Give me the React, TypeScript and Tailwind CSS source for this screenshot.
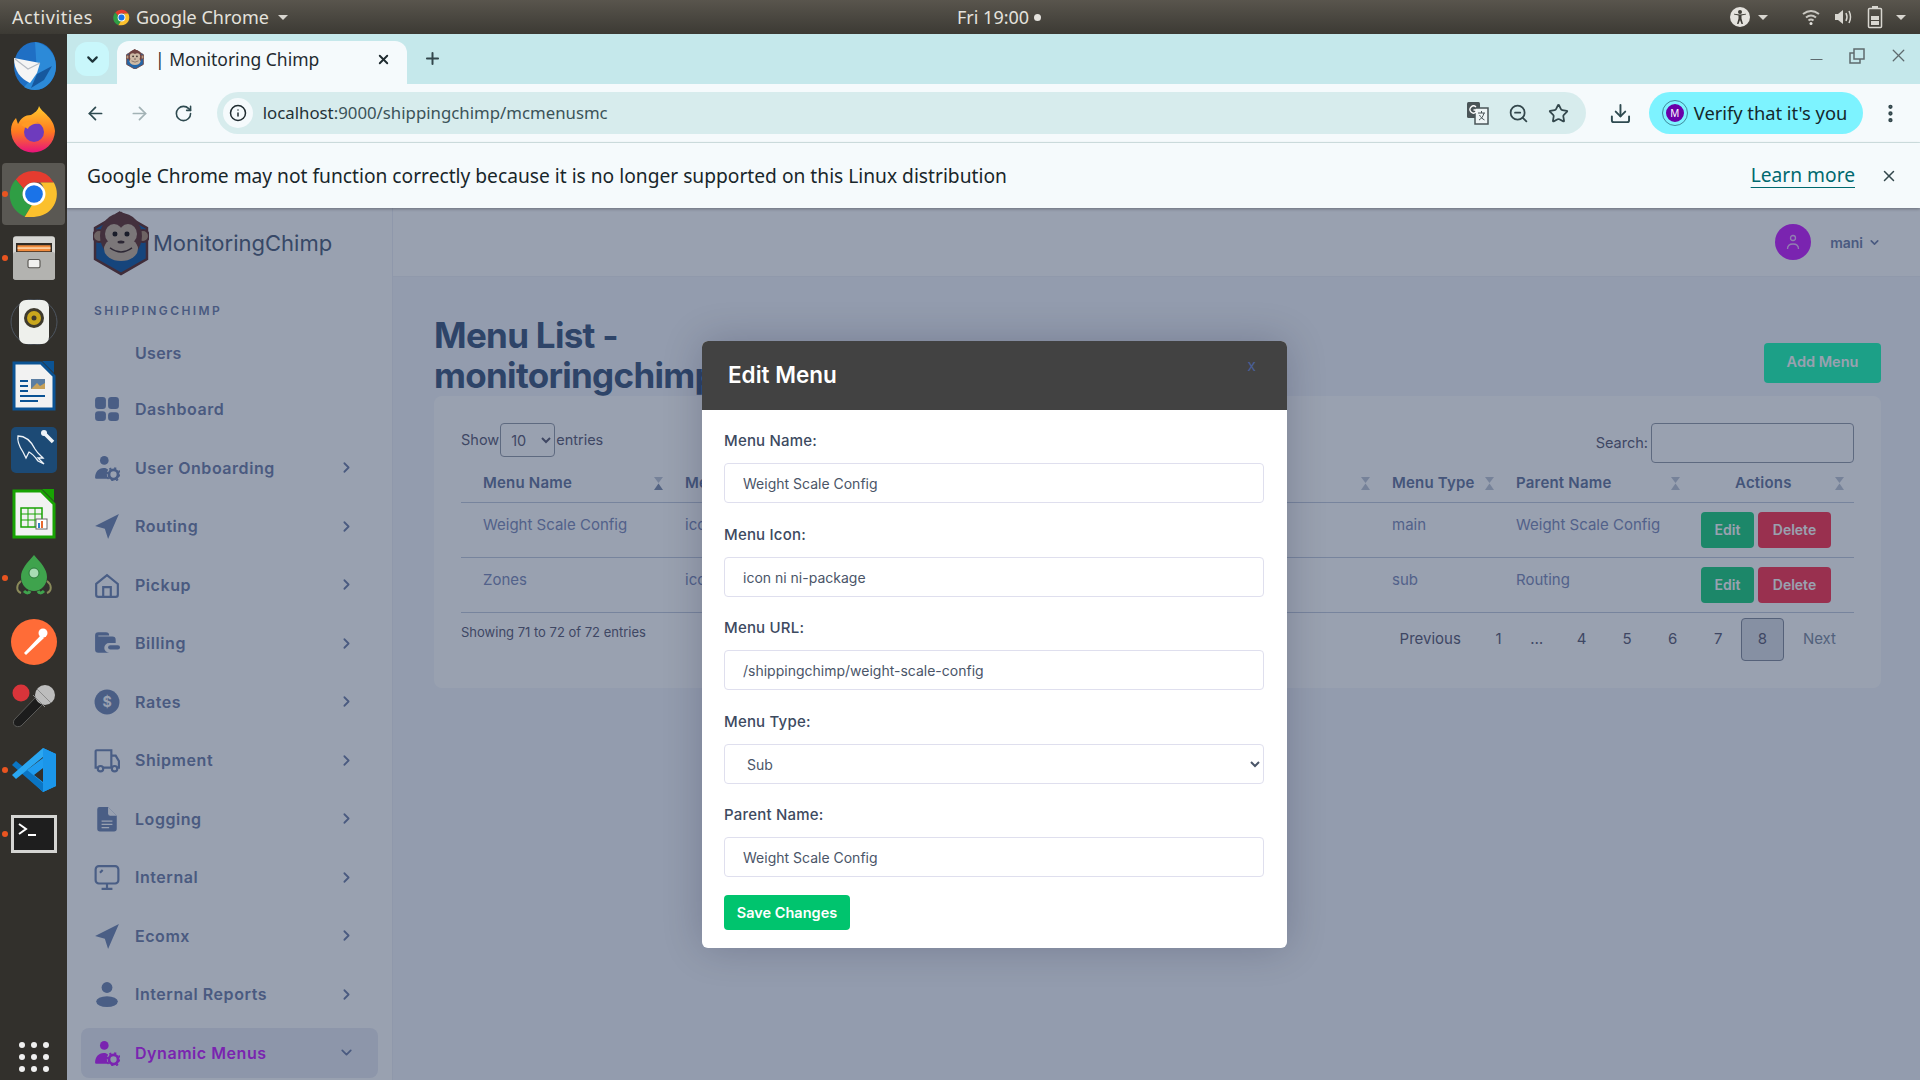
import React from "react";
import {
  ArrowLeft,
  ArrowRight,
  ChevronDown,
  ChevronRight,
  Download,
  EllipsisVertical,
  Info,
  Minus,
  Plus,
  RotateCw,
  Star,
  X,
  ZoomOut,
} from "lucide-react";

const ChromeLogo = ({ size }: { size: number }) => (
  <svg width={size} height={size} viewBox="0 0 48 48">
    <path d="M24 2a22 22 0 0 1 19 11H24a11 11 0 0 0-10 6L6.500 10A22 22 0 0 1 24 2z" fill="#e53c2f" />
    <path d="M6.500 10L14 19a11 11 0 0 0 8 15.500L15 45.500A22 22 0 0 1 6.500 10z" fill="#2f9e44" />
    <path d="M43 13a22 22 0 0 1-19 33h-9l7-11.500A11 11 0 0 0 33 24a11 11 0 0 0-3-11z" fill="#fbc02d" />
    <circle cx="24" cy="24" r="11" fill="#fff" />
    <circle cx="24" cy="24" r="8.500" fill="#1a73e8" />
  </svg>
);

const Monkey = ({ size }: { size: number }) => (
  <svg width={size} height={size * 1.16} viewBox="0 0 56 65">
    <path d="M28 2l26 15v31L28 63 2 48V17z" fill="#2566a8" stroke="#6b3d3a" strokeWidth="2.500" />
    <path d="M22 3l5-3 1 4z" fill="#6b3d3a" />
    <circle cx="6" cy="25" r="6" fill="#b89a80" stroke="#6b3d3a" strokeWidth="2" />
    <circle cx="50" cy="25" r="6" fill="#b89a80" stroke="#6b3d3a" strokeWidth="2" />
    <ellipse cx="28" cy="25" rx="21" ry="23" fill="#6f4340" />
    <ellipse cx="21" cy="23" rx="9" ry="10" fill="#cdb9a4" />
    <ellipse cx="35" cy="23" rx="9" ry="10" fill="#cdb9a4" />
    <ellipse cx="28" cy="38" rx="17" ry="12" fill="#cdb9a4" />
    <circle cx="22" cy="23" r="2.500" fill="#2b2320" />
    <circle cx="34" cy="23" r="2.500" fill="#2b2320" />
    <ellipse cx="28" cy="31" rx="3.500" ry="1.500" fill="#4a3330" />
    <path d="M17 37q11 8 22 0" fill="none" stroke="#4a3330" strokeWidth="1.500" />
  </svg>
);

const Thunderbird = () => (
  <svg width="50" height="50" viewBox="0 0 50 50">
    <ellipse cx="26" cy="25" rx="21" ry="24" fill="#1f6fc4" />
    <path d="M26 1c12 2 21 12 21 24 0 12-9 24-21 24-4 0-8-1-11-3l13-14z" fill="#2c8ad8" />
    <path d="M5 17l26 5-3 10-7 10C12 38 5 30 5 17z" fill="#f5f5f5" />
    <path d="M6 18l13 10 12-6" fill="none" stroke="#b6bcc4" strokeWidth="1.200" />
    <path d="M28 33l15-8-8 14-13 8z" fill="#16589e" />
  </svg>
);

const Firefox = () => (
  <svg width="50" height="50" viewBox="0 0 50 50">
    <defs>
      <linearGradient id="ff" x1="0" y1="0" x2="0" y2="1">
        <stop offset="0" stopColor="#ffcb2e" />
        <stop offset=".55" stopColor="#ff7a1f" />
        <stop offset="1" stopColor="#e8127c" />
      </linearGradient>
    </defs>
    <path d="M30 1c3 7 15 11 16 25a22 22 0 1 1-44-1c0-5 2-9 5-12l2 6c3-6 7-9 13-9 3-2 7-4 8-9z" fill="url(#ff)" />
    <circle cx="25" cy="27" r="10" fill="#6e3bbd" />
    <path d="M12 20c6-6 14-5 19-1-5-1-11 1-12 5z" fill="#ff9a24" />
  </svg>
);

const Files = () => (
  <svg width="42" height="44" viewBox="0 0 56 58">
    <rect x="0" y="0" width="56" height="58" rx="4" fill="#d6d6d3" />
    <rect x="4" y="9" width="48" height="13" fill="#2f2a26" />
    <rect x="6" y="12" width="44" height="8" fill="#f08a3c" />
    <rect x="6" y="15" width="44" height="1.500" fill="#fff2d8" />
    <rect x="0" y="21" width="56" height="37" rx="3" fill="#b3b3b0" />
    <rect x="20" y="31" width="16" height="11" rx="2" fill="#f1f1ef" stroke="#55534f" strokeWidth="1.500" />
  </svg>
);

const Speaker = () => (
  <svg width="50" height="46" viewBox="0 0 50 46">
    <circle cx="25" cy="23" r="23" fill="none" stroke="#4d5560" strokeWidth="1" />
    <rect x="10" y="1" width="30" height="44" rx="7" fill="#eef0ec" />
    <circle cx="25" cy="19" r="10" fill="#3e3a2d" />
    <circle cx="25" cy="19" r="7" fill="#c9a71d" />
    <circle cx="25" cy="19" r="2.500" fill="#3e3a2d" />
  </svg>
);

const Writer = () => (
  <svg width="44" height="50" viewBox="0 0 44 50">
    <path d="M2 2h27l13 13v33H2z" fill="#f2f2f2" stroke="#0b5394" strokeWidth="3" />
    <path d="M30 0h12v12z" fill="#0b5394" />
    <rect x="8" y="19" width="8" height="2" fill="#0b5394" />
    <rect x="8" y="24" width="8" height="2" fill="#0b5394" />
    <rect x="8" y="29" width="8" height="2" fill="#0b5394" />
    <rect x="8" y="34" width="25" height="2" fill="#0b5394" />
    <rect x="8" y="39" width="18" height="2" fill="#0b5394" />
    <rect x="19" y="18" width="14" height="10" fill="#5b7ea3" />
    <path d="M19 28l6-6 3 3 5-3v6z" fill="#c8a25a" />
  </svg>
);

const Workbench = () => (
  <svg width="46" height="46" viewBox="0 0 46 46">
    <rect width="46" height="46" rx="5" fill="#1c4a75" />
    <path d="M7 9c8 0 13 5 17 13 3 5 6 7 8 9l-5 0 6 6-6-3c-3-4-5-7-9-9l-3 6-3-6C8 19 6 14 7 9z" fill="none" stroke="#eef3f8" strokeWidth="1.300" />
    <path d="M33 6l9 9" stroke="#eef3f8" strokeWidth="3.500" />
    <circle cx="33" cy="6" r="3" fill="#eef3f8" />
  </svg>
);

const Calc = () => (
  <svg width="44" height="50" viewBox="0 0 44 50">
    <path d="M2 2h27l13 13v33H2z" fill="#f2f2f2" stroke="#18a303" strokeWidth="3" />
    <path d="M30 0h12v12z" fill="#18a303" />
    <rect x="9" y="19" width="21" height="19" fill="none" stroke="#18a303" strokeWidth="1.500" />
    <path d="M9 25h21M9 31h21M16 19v19M23 19v19" stroke="#18a303" strokeWidth="1" />
    <rect x="24" y="30" width="11" height="10" fill="#fff" stroke="#666" strokeWidth="1" />
    <rect x="26" y="34" width="2" height="5" fill="#2c7ec8" />
    <rect x="29" y="32" width="2" height="7" fill="#e8692e" />
  </svg>
);

const Rocket = () => (
  <svg width="36" height="46" viewBox="0 0 36 46">
    <path d="M18 0c7 8 13 14 13 22 0 8-6 14-13 14S5 30 5 22C5 14 11 8 18 0z" fill="#3fa34d" />
    <circle cx="18" cy="18" r="5" fill="#a8dcb4" stroke="#2b7a3a" />
    <path d="M5 26C0 30 0 36 5 38M31 26c5 4 5 10 0 12" fill="none" stroke="#8a8a5a" strokeWidth="2" />
    <path d="M8 36c3 3 5 2 6 0M22 36c1 2 3 3 6 0" fill="none" stroke="#3fa34d" strokeWidth="3" />
  </svg>
);

const Postman = () => (
  <svg width="46" height="46" viewBox="0 0 46 46">
    <circle cx="23" cy="23" r="23" fill="#ff6c37" />
    <path d="M13 34l17-18 3 3-18 17z" fill="#fff" />
    <circle cx="32" cy="14" r="4.500" fill="#fff" />
  </svg>
);

const Mic = () => (
  <svg width="44" height="44" viewBox="0 0 44 44">
    <path d="M2 36L24 13l7 7-22 22c-5 2-9-1-7-6z" fill="#1c1c1c" stroke="#5a5a58" strokeWidth="1" />
    <circle cx="33" cy="11" r="10" fill="#bdbdbd" />
    <path d="M25 5l14 14M21 11l12 12" stroke="#8c8c8c" strokeWidth="1" />
    <circle cx="9" cy="9" r="8.500" fill="#d9343a" />
  </svg>
);

const VsCode = () => (
  <svg width="44" height="44" viewBox="0 0 44 44">
    <path d="M31 0l13 6v32l-13 6-20-19 20-15v10l-9 7 9 7z" fill="#1f9cf0" />
    <path d="M31 44L0 17l4-4 27 22z" fill="#0a75c4" />
    <path d="M31 0L0 27l4 4 27-22z" fill="#2aa7f2" />
    <path d="M31 0l13 6v32l-13 6z" fill="#1b96ea" />
  </svg>
);

const Term = () => (
  <svg width="46" height="38" viewBox="0 0 46 38">
    <rect width="46" height="38" fill="#d5d5d3" />
    <rect x="3" y="3" width="40" height="32" fill="#1e1e1e" />
    <path d="M8 9l7 5-7 5" fill="none" stroke="#fff" strokeWidth="2" />
    <rect x="17" y="19" width="8" height="2" fill="#fff" />
  </svg>
);

const dockApps = [
  { icon: <Thunderbird />, on: false },
  { icon: <Firefox />, on: false },
  { icon: <ChromeLogo size={50} />, on: true, active: true },
  { icon: <Files />, on: true },
  { icon: <Speaker />, on: false },
  { icon: <Writer />, on: false },
  { icon: <Workbench />, on: false },
  { icon: <Calc />, on: false },
  { icon: <Rocket />, on: true },
  { icon: <Postman />, on: false },
  { icon: <Mic />, on: false },
  { icon: <VsCode />, on: true },
  { icon: <Term />, on: true },
];

const Dock = () => (
  <div className="w-[67px] shrink-0 bg-[#32302c] flex flex-col">
    {dockApps.map((app, i) => (
      <div key={i} className="relative h-[64px] flex items-center justify-center">
        {app.active && <div className="absolute inset-x-[2px] inset-y-[1px] rounded bg-[#5a5853]" />}
        {app.on && <div className="absolute left-[2px] top-[29px] w-[6px] h-[6px] rounded-full bg-[#e95420]" />}
        <div className="relative flex">{app.icon}</div>
      </div>
    ))}
    <div className="mt-auto mb-[8px] mx-auto grid grid-cols-3 gap-[6px]">
      {Array.from({ length: 9 }).map((_, i) => (
        <div key={i} className="w-[6px] h-[6px] rounded-full bg-[#f0f0f0]" />
      ))}
    </div>
  </div>
);

const TopBar = () => (
  <div className="h-[34px] shrink-0 bg-gradient-to-b from-[#59554d] to-[#3c3a34] flex items-center text-[#e4e2dd] text-[18px] font-['Noto_Sans',sans-serif] relative">
    <span className="ml-[12px] tracking-[0.600px]">Activities</span>
    <span className="ml-[20px] flex"><ChromeLogo size={17} /></span>
    <span className="ml-[6px]">Google Chrome</span>
    <span className="ml-[9px] w-0 h-0 border-x-[5px] border-x-transparent border-t-[5px] border-t-[#d8d6d0]" />
    <div className="absolute left-[957px] top-[4px] flex items-center gap-[5px]">
      <span>Fri 19:00</span>
      <span className="w-[7px] h-[7px] rounded-full bg-[#e4e2dd]" />
    </div>
    <div className="ml-auto mr-[14px] flex items-center">
      <svg width="22" height="22" viewBox="0 0 22 22">
        <circle cx="11" cy="11" r="10" fill="#e4e2dd" />
        <circle cx="11" cy="6" r="2" fill="#3f3d37" />
        <path d="M5 8.500l4.500 1v3L8 18h1.500l1.500-4 1.500 4H14l-1.500-5.500v-3L17 8.500v-.8l-6 .8-6-.8z" fill="#3f3d37" />
      </svg>
      <span className="ml-[7px] w-0 h-0 border-x-[5px] border-x-transparent border-t-[5px] border-t-[#d8d6d0]" />
      <svg className="ml-[33px]" width="20" height="20" viewBox="0 0 20 20" fill="none" stroke="#c9c7c1" strokeWidth="2">
        <path d="M2 7q8-6 16 0" />
        <path d="M5 10.500q5-4 10 0" />
        <path d="M7.500 13.500q2.500-2 5 0" />
        <circle cx="10" cy="16.500" r="1.500" fill="#e4e2dd" stroke="none" />
      </svg>
      <svg className="ml-[12px]" width="20" height="20" viewBox="0 0 20 20" fill="none" stroke="#d8d6d0" strokeWidth="1.500">
        <path d="M2 7h3l5-4v14l-5-4H2z" fill="#d8d6d0" stroke="none" />
        <path d="M13 6q2 4 0 8" />
        <path d="M16 4q3 6 0 12" />
      </svg>
      <svg className="ml-[13.500px]" width="18" height="24" viewBox="0 0 18 24" fill="none">
        <rect x="6" y="1" width="6" height="3" fill="#d8d6d0" />
        <rect x="2.500" y="3.500" width="13" height="19" rx="1" stroke="#d8d6d0" strokeWidth="1.500" />
        <rect x="5" y="11" width="8" height="4" fill="#d8d6d0" />
        <rect x="5" y="16" width="8" height="4" fill="#d8d6d0" />
      </svg>
      <span className="ml-[12px] w-0 h-0 border-x-[5px] border-x-transparent border-t-[5px] border-t-[#d8d6d0]" />
    </div>
  </div>
);

const ChromeFrame = () => (
  <div className="shrink-0 font-['Noto_Sans',sans-serif]">
    <div className="h-[50px] bg-[#c5e8eb] flex items-end relative">
      <div className="absolute left-[8px] top-[8px] w-[34px] h-[34px] rounded-xl bg-[#c9f7fb] flex items-center justify-center">
        <ChevronDown size={17} strokeWidth={3} className="text-[#1d3338]" />
      </div>
      <div className="ml-[50px] w-[290px] h-[43px] rounded-t-xl bg-[#f5fafc] flex items-center pl-[9px] pr-[8px] pb-[7px]">
        <span className="flex"><Monkey size={18} /></span>
        <span className="ml-[11px] text-[17.500px] text-[#1f2b30] whitespace-nowrap">| Monitoring Chimp</span>
        <X size={15} strokeWidth={3} className="ml-auto mr-[8px] text-[#1f2b30]" />
      </div>
      <Plus size={19} strokeWidth={2.500} className="ml-[16px] mb-[16px] text-[#33474c]" />
      <div className="ml-auto mr-[11px] mb-[15px] flex items-center gap-[22px] text-[#5e6a6e]">
        <Minus size={19} strokeWidth={1.500} className="mt-[8px]" />
        <svg width="18" height="18" viewBox="0 0 18 18" fill="none" stroke="currentColor" strokeWidth="1.500">
          <rect x="6" y="2" width="10" height="10" />
          <path d="M6 6H2v10h10v-4" />
        </svg>
        <X size={21} strokeWidth={1.500} />
      </div>
    </div>
    <div className="h-[59px] bg-[#f5fafc] border-b border-[#d5e6e7] flex items-center pl-[18px] pr-[18px]">
      <ArrowLeft size={21} className="text-[#2e4a50]" />
      <ArrowRight size={21} className="ml-[23px] text-[#a2b2b5]" />
      <RotateCw size={19} className="ml-[24px] text-[#2e4a50]" />
      <div className="ml-[24px] w-[1374px] h-[42px] rounded-full bg-[#d7eced] flex items-center pl-[6px] pr-[17px]">
        <span className="w-[30px] h-[30px] rounded-full bg-[#f5fafc] flex items-center justify-center">
          <Info size={18} className="text-[#1f2b30]" />
        </span>
        <span className="ml-[10px] text-[16.800px] text-[#1f3136] whitespace-nowrap">
          localhost<span className="text-[#3b5359]">:9000/shippingchimp/mcmenusmc</span>
        </span>
        <div className="ml-auto flex items-center gap-[19px] text-[#33474c]">
          <svg width="22" height="24" viewBox="0 0 22 24">
            <rect x="0" y="1" width="13" height="16" rx="1.500" fill="#4a5558" />
            <rect x="8" y="7" width="13" height="16" fill="#eef5f6" stroke="#4a5558" strokeWidth="1.500" />
            <path d="M11 12h7M14.500 10v2M17 12c-1 4-3 6-5 7M12.500 14c1 2 3 4 5 5" fill="none" stroke="#4a5558" strokeWidth="1" />
            <path d="M9 6a3.500 3.500 0 1 0 0 5V9H6.500" fill="none" stroke="#fff" strokeWidth="1.300" />
          </svg>
          <ZoomOut size={21} />
          <Star size={21} />
        </div>
      </div>
      <Download size={23} className="ml-[23px] text-[#2e4a50]" />
      <div className="ml-[17px] w-[215px] h-[42px] rounded-full bg-[#7df3ff] flex items-center pl-[14px]">
        <span className="w-[24px] h-[24px] rounded-full bg-[#6a00a8] border-[3px] border-[#7df3ff] outline outline-1 outline-[#3f8a9c] flex items-center justify-center text-[10px] text-white">M</span>
        <span className="ml-[7px] text-[18.300px] text-[#14282c] whitespace-nowrap">Verify that it's you</span>
      </div>
      <EllipsisVertical size={23} strokeWidth={2.500} className="ml-[16px] text-[#33474c]" />
    </div>
    <div className="h-[65px] bg-[#f5fafc] flex items-center pl-[20px] pr-[22px] text-[19.200px] text-[#18262a] shadow-[0_1px_3px_rgba(0,0,0,0.3)] relative z-20">
      <span className="whitespace-nowrap relative top-[1px]">Google Chrome may not function correctly because it is no longer supported on this Linux distribution</span>
      <span className="ml-auto text-[#00696f] underline underline-offset-[5px]">Learn more</span>
      <X size={18} strokeWidth={2} className="ml-[25px] text-[#33474c]" />
    </div>
  </div>
);

const iconProps = { width: 26, height: 26, viewBox: "0 0 24 24", fill: "#7b8fb8" };

const GridIcon = () => (
  <svg {...iconProps}>
    <rect x="1" y="1" width="10" height="11" rx="3" />
    <rect x="13" y="1" width="10" height="11" rx="3" />
    <rect x="1" y="14" width="10" height="9" rx="3" />
    <rect x="13" y="15" width="10" height="8" rx="3" />
  </svg>
);

const UserGear = ({ color = "#7b8fb8" }: { color?: string }) => (
  <svg width="26" height="26" viewBox="0 0 24 24" fill={color}>
    <circle cx="9.500" cy="5" r="4" />
    <path d="M1 21c0-5 3-9 8-9 2 0 3 .5 4 1.500-1.500 2-1.500 6 0 8.500H3c-1.500 0-2-.5-2-1z" />
    <circle cx="18" cy="18" r="4.200" fill="none" stroke={color} strokeWidth="2.600" />
    <circle cx="18" cy="18" r="6" fill="none" stroke={color} strokeWidth="1.600" strokeDasharray="2 2.700" />
  </svg>
);

const SendIcon = () => (
  <svg {...iconProps}>
    <path d="M23 1L1 12l9 2.500L13 24z" />
  </svg>
);

const HomeIcon = () => (
  <svg {...iconProps} fill="none" stroke="#7b8fb8" strokeWidth="2">
    <path d="M2 11l10-8 10 8v10a2 2 0 0 1-2 2H4a2 2 0 0 1-2-2z" />
    <path d="M8.500 23v-9h7v9" />
  </svg>
);

const WalletIcon = () => (
  <svg {...iconProps}>
    <path d="M1 5a3 3 0 0 1 3-3h7a3 3 0 0 1 3 3H4v1h13a3 3 0 0 1 3 3v3h-6a4 4 0 0 0 0 9H4a3 3 0 0 1-3-3z" />
    <rect x="13" y="14" width="11" height="4" rx="2" />
  </svg>
);

const DollarIcon = () => (
  <svg {...iconProps}>
    <circle cx="12" cy="12" r="11.500" />
    <text x="12" y="17" fontSize="13" fontWeight="700" textAnchor="middle" fill="#ffffff" fontFamily="Inter, sans-serif">$</text>
  </svg>
);

const TruckIcon = () => (
  <svg {...iconProps} fill="none" stroke="#7b8fb8" strokeWidth="2">
    <path d="M4 19H1.500V4a1 1 0 0 1 1-1H16v16H8" />
    <path d="M16 8h4l3 5v6h-2.500M16 19h1" />
    <circle cx="6" cy="20" r="2.500" />
    <circle cx="19" cy="20" r="2.500" />
  </svg>
);

const DocIcon = () => (
  <svg {...iconProps}>
    <path d="M5 1h8l8 8v12a2.500 2.500 0 0 1-2.500 2.500h-13A2.500 2.500 0 0 1 3 21V3a2 2 0 0 1 2-2z" />
    <path d="M13 1v6a2 2 0 0 0 2 2h6z" fill="#ffffff" />
    <path d="M7 14h10M7 17h10M7 20h7" stroke="#ffffff" strokeWidth="1.200" />
  </svg>
);

const MonitorIcon = () => (
  <svg {...iconProps} fill="none" stroke="#7b8fb8" strokeWidth="2">
    <rect x="1.500" y="2" width="21" height="16" rx="3" />
    <path d="M12 18v4M7 23h10M5.500 8l2.500-2.500" />
  </svg>
);

const UserIcon = () => (
  <svg {...iconProps}>
    <circle cx="12" cy="6" r="5" />
    <ellipse cx="12" cy="19" rx="10" ry="5" />
  </svg>
);

const navItems = [
  { label: "Dashboard", icon: <GridIcon /> },
  { label: "User Onboarding", icon: <UserGear />, arrow: true },
  { label: "Routing", icon: <SendIcon />, arrow: true },
  { label: "Pickup", icon: <HomeIcon />, arrow: true },
  { label: "Billing", icon: <WalletIcon />, arrow: true },
  { label: "Rates", icon: <DollarIcon />, arrow: true },
  { label: "Shipment", icon: <TruckIcon />, arrow: true },
  { label: "Logging", icon: <DocIcon />, arrow: true },
  { label: "Internal", icon: <MonitorIcon />, arrow: true },
  { label: "Ecomx", icon: <SendIcon />, arrow: true },
  { label: "Internal Reports", icon: <UserIcon />, arrow: true },
];

const Sidebar = () => (
  <aside className="w-[326px] shrink-0 bg-white border-r border-[#eef0f6] flex flex-col pl-[14px] pr-[14px]">
    <div className="h-[69px] shrink-0 flex items-center pl-[12px] pt-[2px]">
      <Monkey size={56} />
      <span className="ml-[4px] text-[22px] text-[#5c6b85] whitespace-nowrap">MonitoringChimp</span>
    </div>
    <div className="mt-[25px] pl-[13px] text-[12px] font-semibold tracking-[2.400px] text-[#7b89af]">SHIPPINGCHIMP</div>
    <div className="mt-[14px] h-[38px] flex items-center pl-[54px] text-[16px] font-semibold tracking-[0.300px] text-[#7b89af]">Users</div>
    <nav className="mt-[12px] flex flex-col gap-[8.500px]">
      {navItems.map((item) => (
        <div key={item.label} className="h-[50px] flex items-center pl-[13px] pr-[23px] text-[#7b89af]">
          <span className="w-[41px] flex">{item.icon}</span>
          <span className="text-[16px] font-semibold tracking-[0.550px] whitespace-nowrap">{item.label}</span>
          {item.arrow && <ChevronRight size={17} strokeWidth={2.500} className="ml-auto" />}
        </div>
      ))}
      <div className="h-[50px] flex items-center pl-[13px] pr-[23px] rounded-lg bg-[#ebedf5] text-[#cb2fff]">
        <span className="w-[41px] flex"><UserGear color="#cb2fff" /></span>
        <span className="text-[16px] font-semibold tracking-[0.550px] whitespace-nowrap">Dynamic Menus</span>
        <ChevronDown size={17} strokeWidth={2.500} className="ml-auto text-[#7b89af]" />
      </div>
    </nav>
  </aside>
);

const SortIcon = ({ asc }: { asc?: boolean }) => (
  <svg width="9" height="13" viewBox="0 0 9 13" className="shrink-0" fill="#8b97b4">
    <path d="M0 0h9L4.500 6z" opacity=".5" />
    <path d="M4.500 6.500L9 13H0z" opacity={asc ? 1 : 0.5} />
  </svg>
);

const columns = [
  { label: "Menu Name", width: "w-[202px]", asc: true },
  { label: "Menu Icon", width: "w-[340px]" },
  { label: "Menu URL", width: "w-[367px]" },
  { label: "Menu Type", width: "w-[124px]" },
  { label: "Parent Name", width: "w-[186px]" },
];

const rows = [
  { name: "Weight Scale Config", icon: "icon ni ni-package", url: "/shippingchimp/weight-scale-config", type: "main", parent: "Weight Scale Config" },
  { name: "Zones", icon: "icon ni ni-map", url: "/shippingchimp/zones", type: "sub", parent: "Routing" },
];

const pages = [
  { label: "1", width: "w-[31.500px]" },
  { label: "…", width: "w-[44.500px]" },
  { label: "4", width: "w-[45.500px]" },
  { label: "5", width: "w-[45.500px]" },
  { label: "6", width: "w-[45.500px]" },
  { label: "7", width: "w-[45.500px]" },
];

const MenuTable = () => (
  <table className="w-full table-fixed border-collapse text-[15px]">
    <thead>
      <tr className="h-[39px] border-b border-[#c7cfe0] text-[#7180a5]">
        {columns.map((col) => (
          <th key={col.label} className={`${col.width} p-0 text-left font-semibold`}>
            <div className="flex items-center pl-[22px] justify-between whitespace-nowrap tracking-[0.200px] pt-[2px]">
              {col.label}
              <SortIcon asc={col.asc} />
            </div>
          </th>
        ))}
        <th className="p-0 font-semibold">
          <div className="flex items-center justify-between pl-[55px] pr-[10px] tracking-[0.200px] pt-[2px]">
            Actions
            <SortIcon />
          </div>
        </th>
      </tr>
    </thead>
    <tbody className="text-[#8994c0]">
      {rows.map((row) => (
        <tr key={row.name} className="h-[55px] border-b border-[#c7cfe0] align-top">
          <td className="pl-[22px] pt-[11px] whitespace-nowrap">{row.name}</td>
          <td className="pl-[22px] pt-[11px] whitespace-nowrap">{row.icon}</td>
          <td className="pl-[22px] pt-[11px] whitespace-nowrap">{row.url}</td>
          <td className="pl-[22px] pt-[11px] whitespace-nowrap">{row.type}</td>
          <td className="pl-[22px] pt-[11px] whitespace-nowrap">{row.parent}</td>
          <td className="pl-[21px] pt-[9px]">
            <div className="flex gap-[4px]">
              <button className="w-[53px] h-[36px] rounded bg-[#2fd489] text-white text-[14px] font-semibold">Edit</button>
              <button className="w-[73px] h-[36px] rounded bg-[#ff435d] text-white text-[14px] font-semibold">Delete</button>
            </div>
          </td>
        </tr>
      ))}
    </tbody>
  </table>
);

const Main = () => (
  <main className="flex-1 min-w-0 flex flex-col bg-[#f5f7fc]">
    <header className="h-[69px] shrink-0 bg-white border-b border-[#f0f1f7] flex items-center justify-end pr-[39px]">
      <div className="w-[36px] h-[36px] rounded-full bg-[#cb2fff] flex items-center justify-center">
        <svg width="14" height="16" viewBox="0 0 14 16" fill="none" stroke="#f0c8ff" strokeWidth="1.300">
          <circle cx="7" cy="4" r="2.500" />
          <path d="M1.500 15c0-3 2-5 5.500-5s5.500 2 5.500 5" />
        </svg>
      </div>
      <span className="ml-[19px] text-[14px] font-semibold text-[#7b89af]">mani</span>
      <ChevronDown size={13} strokeWidth={3} className="ml-[5px] text-[#7b89af]" />
    </header>
    <div className="pl-[41px] pr-[39px] flex-1">
      <div className="h-[119px] flex items-start justify-between">
        <h1 className="mt-[38px] w-[400px] text-[35px] leading-[40px] font-bold tracking-[-0.700px] text-[#4d6487]">
          Menu List - monitoringchimp
        </h1>
        <button className="mt-[66px] w-[117px] h-[40px] rounded bg-[#2ffdbb] text-white text-[14.500px] font-semibold pb-[3px]">Add Menu</button>
      </div>
      <section className="h-[292px] rounded-lg bg-white px-[27px] pt-[27px]">
        <div className="flex items-start justify-between text-[14.500px] text-[#69697f]">
          <div className="flex items-center h-[34px]">
            <span>Show</span>
            <select className="ml-[1px] mr-[1px] w-[55px] h-[34px] rounded border border-[#9da3af] pl-[6px] text-[#69697f] bg-transparent" defaultValue="10">
              <option>10</option>
            </select>
            <span>entries</span>
          </div>
          <div className="flex items-center h-[40px]">
            <span>Search:</span>
            <input className="ml-[3px] w-[203px] h-[40px] rounded border border-[#9da3af]" readOnly />
          </div>
        </div>
        <MenuTable />
        <div className="flex items-start justify-between">
          <span className="mt-[10px] text-[13px] text-[#69697f]">Showing 71 to 72 of 72 entries</span>
          <div className="mt-[5px] flex items-center text-[15px] text-[#69697f] h-[43px]">
            <span className="mr-[22px]">Previous</span>
            {pages.map((p) => (
              <span key={p.label} className={`${p.width} text-center`}>{p.label}</span>
            ))}
            <span className="w-[43px] h-[43px] rounded-sm border border-[#8e95a3] bg-[#dfe3ea] flex items-center justify-center">8</span>
            <span className="ml-[19px] mr-[18px] text-[#8994a8]">Next</span>
          </div>
        </div>
      </section>
    </div>
  </main>
);

const Field = ({ label, value, className }: { label: string; value: string; className: string }) => (
  <label className={`block ${className}`}>
    <span className="block h-[22px] leading-[22px] text-[15px] font-medium tracking-[0.200px] text-[#3d4a5f]">{label}</span>
    <input
      readOnly
      value={value}
      className="mt-[11px] w-full h-[40px] rounded border border-[#dfdfee] pl-[18px] text-[14px] text-[#4a5568] outline-none"
    />
  </label>
);

const EditModal = () => (
  <div className="absolute inset-0 z-10 bg-[#001439]/40 flex justify-center pt-[133px] pl-[2px]">
    <div className="w-[585px] h-[607px] rounded-md bg-white overflow-hidden shadow-[0_0_40px_rgba(0,10,40,0.2)]">
      <div className="h-[69px] bg-[#424242] flex items-start justify-between pl-[26px] pr-[31px] pt-[17px]">
        <h2 className="text-[22.500px] font-semibold leading-[34px] text-white">Edit Menu</h2>
        <span className="text-[16px] text-[#4a5f96] mt-[-5px]">x</span>
      </div>
      <form className="pl-[22px] pr-[23px] pt-[20px]">
        <Field label="Menu Name:" value="Weight Scale Config" className="" />
        <Field label="Menu Icon:" value="icon ni ni-package" className="mt-[21px]" />
        <Field label="Menu URL:" value="/shippingchimp/weight-scale-config" className="mt-[20px]" />
        <label className="block mt-[21px]">
          <span className="block h-[22px] leading-[22px] text-[15px] font-medium tracking-[0.200px] text-[#3d4a5f]">Menu Type:</span>
          <select className="mt-[11px] w-full h-[40px] rounded border border-[#dfdfee] pl-[18px] text-[14px] text-[#4a5568] bg-white outline-none" defaultValue="Sub">
            <option>Sub</option>
            <option>Main</option>
          </select>
        </label>
        <Field label="Parent Name:" value="Weight Scale Config" className="mt-[20px]" />
        <button type="button" className="mt-[18px] w-[126px] h-[35px] rounded bg-[#00c46e] text-white text-[14.500px] font-semibold">
          Save Changes
        </button>
      </form>
    </div>
  </div>
);

export default function App() {
  return (
    <div className="w-[1920px] h-[1080px] overflow-hidden flex flex-col font-['Inter',sans-serif]">
      <TopBar />
      <div className="flex-1 min-h-0 flex">
        <Dock />
        <div className="flex-1 min-w-0 flex flex-col">
          <ChromeFrame />
          <div className="relative flex-1 min-h-0 flex overflow-hidden">
            <Sidebar />
            <Main />
            <EditModal />
          </div>
        </div>
      </div>
    </div>
  );
}
